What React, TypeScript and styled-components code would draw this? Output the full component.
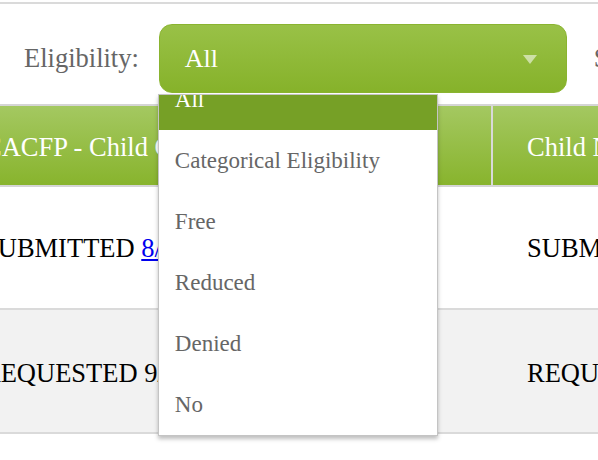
import React from "react";
import styled, { createGlobalStyle } from "styled-components";

const GlobalStyle = createGlobalStyle`
  html, body { margin: 0; padding: 0; background: #fff; }
  body { font-family: "Liberation Serif", "Times New Roman", serif; overflow: hidden; }
`;

const Page = styled.div`
  width: 598px;
  height: 460px;
  overflow: hidden;
  padding-top: 2px;
  box-sizing: border-box;
`;

const FilterBar = styled.div`
  display: flex;
  align-items: center;
  gap: 27px;
  height: 102px;
  box-sizing: border-box;
  padding: 20px 0 11px 24px;
  border-top: 2px solid #dadada;
  white-space: nowrap;
`;

const FilterGroup = styled.div`
  display: flex;
  align-items: center;
  gap: 20px;
  flex: none;
`;

const Label = styled.span`
  font-size: 26.5px;
  color: #666;
`;

const SelectWrap = styled.div`
  position: relative;
`;

const SelectBox = styled.div`
  width: 408px;
  height: 69px;
  box-sizing: border-box;
  border-radius: 13px;
  border: 1px solid #8ab430;
  background: linear-gradient(#99c147, #86b22a);
  display: flex;
  align-items: center;
  justify-content: space-between;
  padding: 0 29px 0 25px;
  color: #fff;
  font-size: 26px;
`;

const Arrow = styled.span`
  width: 0;
  height: 0;
  border-left: 7px solid transparent;
  border-right: 7px solid transparent;
  border-top: 9px solid rgba(255, 255, 255, 0.55);
  margin-top: 2px;
`;

const Dropdown = styled.div`
  position: absolute;
  top: 70px;
  left: -1px;
  width: 280px;
  height: 342px;
  box-sizing: border-box;
  border: 1px solid #c4c4c4;
  background: #fff;
  box-shadow: 0 3px 4px rgba(0, 0, 0, 0.25);
  overflow: hidden;
  z-index: 10;
`;

const OptionList = styled.ul`
  list-style: none;
  margin: -26px 0 0;
  padding: 0;
`;

const Option = styled.li<{ $active?: boolean }>`
  height: 61px;
  line-height: 61px;
  padding-left: 16px;
  font-size: 23px;
  color: ${(p) => (p.$active ? "#fff" : "#666")};
  background: ${(p) => (p.$active ? "#76a026" : "transparent")};
`;

const TableWrap = styled.div`
  overflow: hidden;
  width: 598px;
`;

const Table = styled.table`
  border-collapse: separate;
  border-spacing: 0;
  table-layout: fixed;
  width: 1142px;
  margin-left: -51px;
  font-size: 26.5px;
  font-family: "Liberation Serif", "Times New Roman", serif;
`;

const HeadCell = styled.th<{ $divider?: boolean }>`
  height: 83px;
  box-sizing: border-box;
  padding: 4px 0 0 ${(p) => (p.$divider ? 34 : 35)}px;
  background: linear-gradient(#a4c861, #88b42d);
  color: #fff;
  font-weight: normal;
  text-align: left;
  white-space: nowrap;
  overflow: hidden;
  border-top: 2px solid #d5d5d5;
  border-bottom: 2px solid #d5d5d5;
  border-left: ${(p) => (p.$divider ? "2px solid #d9d9d9" : "none")};
`;

const Row = styled.tr<{ $shaded?: boolean }>`
  background: ${(p) => (p.$shaded ? "#f2f2f2" : "#fff")};
`;

const Cell = styled.td<{ $h: number; $pt: number; $divider?: boolean }>`
  height: ${(p) => p.$h}px;
  box-sizing: border-box;
  padding: ${(p) => p.$pt}px 0 0 ${(p) => (p.$divider ? 36 : 34)}px;
  color: #000;
  white-space: nowrap;
  overflow: hidden;
  border-bottom: 2px solid #dadada;
  vertical-align: middle;
`;

const Link = styled.a`
  color: #0000ee;
  text-decoration: underline;
`;

const options = ["All", "Categorical Eligibility", "Free", "Reduced", "Denied", "No"];

export default function App() {
  return (
    <Page>
      <GlobalStyle />
      <FilterBar>
        <FilterGroup>
          <Label>Eligibility:</Label>
          <SelectWrap>
            <SelectBox>
              <span>All</span>
              <Arrow />
            </SelectBox>
            <Dropdown>
              <OptionList>
                {options.map((o, i) => (
                  <Option key={o} $active={i === 0}>
                    {o}
                  </Option>
                ))}
              </OptionList>
            </Dropdown>
          </SelectWrap>
        </FilterGroup>
        <FilterGroup>
          <Label>Status:</Label>
        </FilterGroup>
      </FilterBar>
      <TableWrap>
        <Table>
          <colgroup>
            <col style={{ width: 542 }} />
            <col style={{ width: 600 }} />
          </colgroup>
          <thead>
            <tr>
              <HeadCell>CACFP - Child Care</HeadCell>
              <HeadCell $divider>Child Nutrition</HeadCell>
            </tr>
          </thead>
          <tbody>
            <Row>
              <Cell $h={123} $pt={1}>
                SUBMITTED <Link href="#">8/21/2023</Link>
              </Cell>
              <Cell $h={123} $pt={1} $divider>
                SUBMITTED
              </Cell>
            </Row>
            <Row $shaded>
              <Cell $h={124} $pt={4}>REQUESTED 9/05/2023</Cell>
              <Cell $h={124} $pt={4} $divider>
                REQUESTED
              </Cell>
            </Row>
          </tbody>
        </Table>
      </TableWrap>
    </Page>
  );
}
